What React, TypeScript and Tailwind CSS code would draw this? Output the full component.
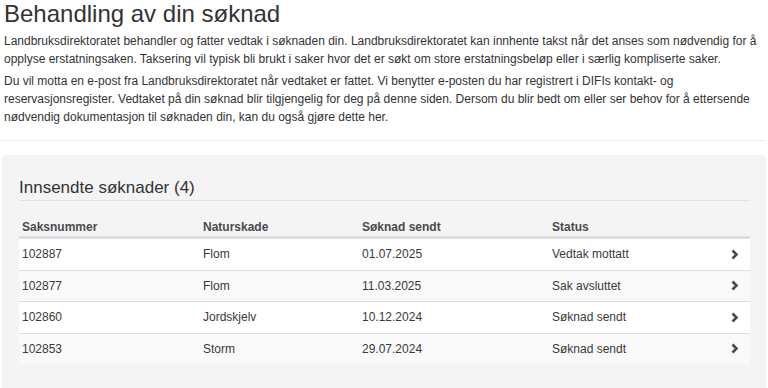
const rows = [
  { nr: "102887", type: "Flom", sent: "01.07.2025", status: "Vedtak mottatt" },
  { nr: "102877", type: "Flom", sent: "11.03.2025", status: "Sak avsluttet" },
  { nr: "102860", type: "Jordskjelv", sent: "10.12.2024", status: "Søknad sendt" },
  { nr: "102853", type: "Storm", sent: "29.07.2024", status: "Søknad sendt" },
];

const Chevron = () => (
  <svg width="8" height="11" viewBox="0 0 8 11" className="block">
    <polyline points="1.5,1.5 5.5,5.5 1.5,9.5" fill="none" stroke="#4b4b4b" strokeWidth="2.6" />
  </svg>
);

const App = () => {
  return (
    <div className="min-h-screen w-full bg-white pr-[2px] text-[#333] font-['Liberation_Sans',Arial,sans-serif]">
      <div className="pl-[4px]">
        <h1 className="m-0 text-[24px] leading-[28px] font-normal">Behandling av din søknad</h1>
        <p className="mt-[4px] text-[12px] leading-[18px]">
          Landbruksdirektoratet behandler og fatter vedtak i søknaden din. Landbruksdirektoratet kan innhente takst når det anses som nødvendig for å
          opplyse erstatningsaken. Taksering vil typisk bli brukt i saker hvor det er søkt om store erstatningsbeløp eller i særlig kompliserte saker.
        </p>
        <p className="mt-[4px] text-[12px] leading-[18px]">
          Du vil motta en e-post fra Landbruksdirektoratet når vedtaket er fattet. Vi benytter e-posten du har registrert i DIFIs kontakt- og
          reservasjonsregister. Vedtaket på din søknad blir tilgjengelig for deg på denne siden. Dersom du blir bedt om eller ser behov for å ettersende
          nødvendig dokumentasjon til søknaden din, kan du også gjøre dette her.
        </p>
      </div>

      <hr className="mt-[14px] border-0 border-t border-[#eeeeee]" />

      {/* Innsendte søknader */}
      <div className="ml-[2px] mt-[14px] rounded-[4px] bg-[#f4f4f4] pl-[17px] pr-[16px] pt-[21px] pb-[30px]">
        <h2 className="text-[17px] leading-[24px] font-normal border-b border-[#e2e2e2]">Innsendte søknader (4)</h2>

        <div className="text-[12px] leading-[18px]">
          <div className="flex items-end h-[37px] border-b-2 border-[#dddddd] font-bold text-[#4a4a4a]">
            <div className="w-[181px] px-[3px]">Saksnummer</div>
            <div className="w-[159px] px-[3px]">Naturskade</div>
            <div className="w-[190px] px-[3px]">Søknad sendt</div>
            <div className="flex-1 px-[3px]">Status</div>
            <div className="w-[20px]" />
          </div>
          {rows.map((r, i) => (
            <div
              key={r.nr}
              className={`flex items-center h-[31.5px] border-t border-[#dddddd] text-[#3a3a3a] ${i % 2 === 1 ? "bg-[#f9f9f9]" : "bg-white"}`}
            >
              <div className="w-[181px] px-[3px]">{r.nr}</div>
              <div className="w-[159px] px-[3px]">{r.type}</div>
              <div className="w-[190px] px-[3px]">{r.sent}</div>
              <div className="flex-1 px-[3px]">{r.status}</div>
              <div className="w-[20px] flex justify-start pl-[1px]">
                <Chevron />
              </div>
            </div>
          ))}
        </div>
      </div>
    </div>
  );
};

export default App;
